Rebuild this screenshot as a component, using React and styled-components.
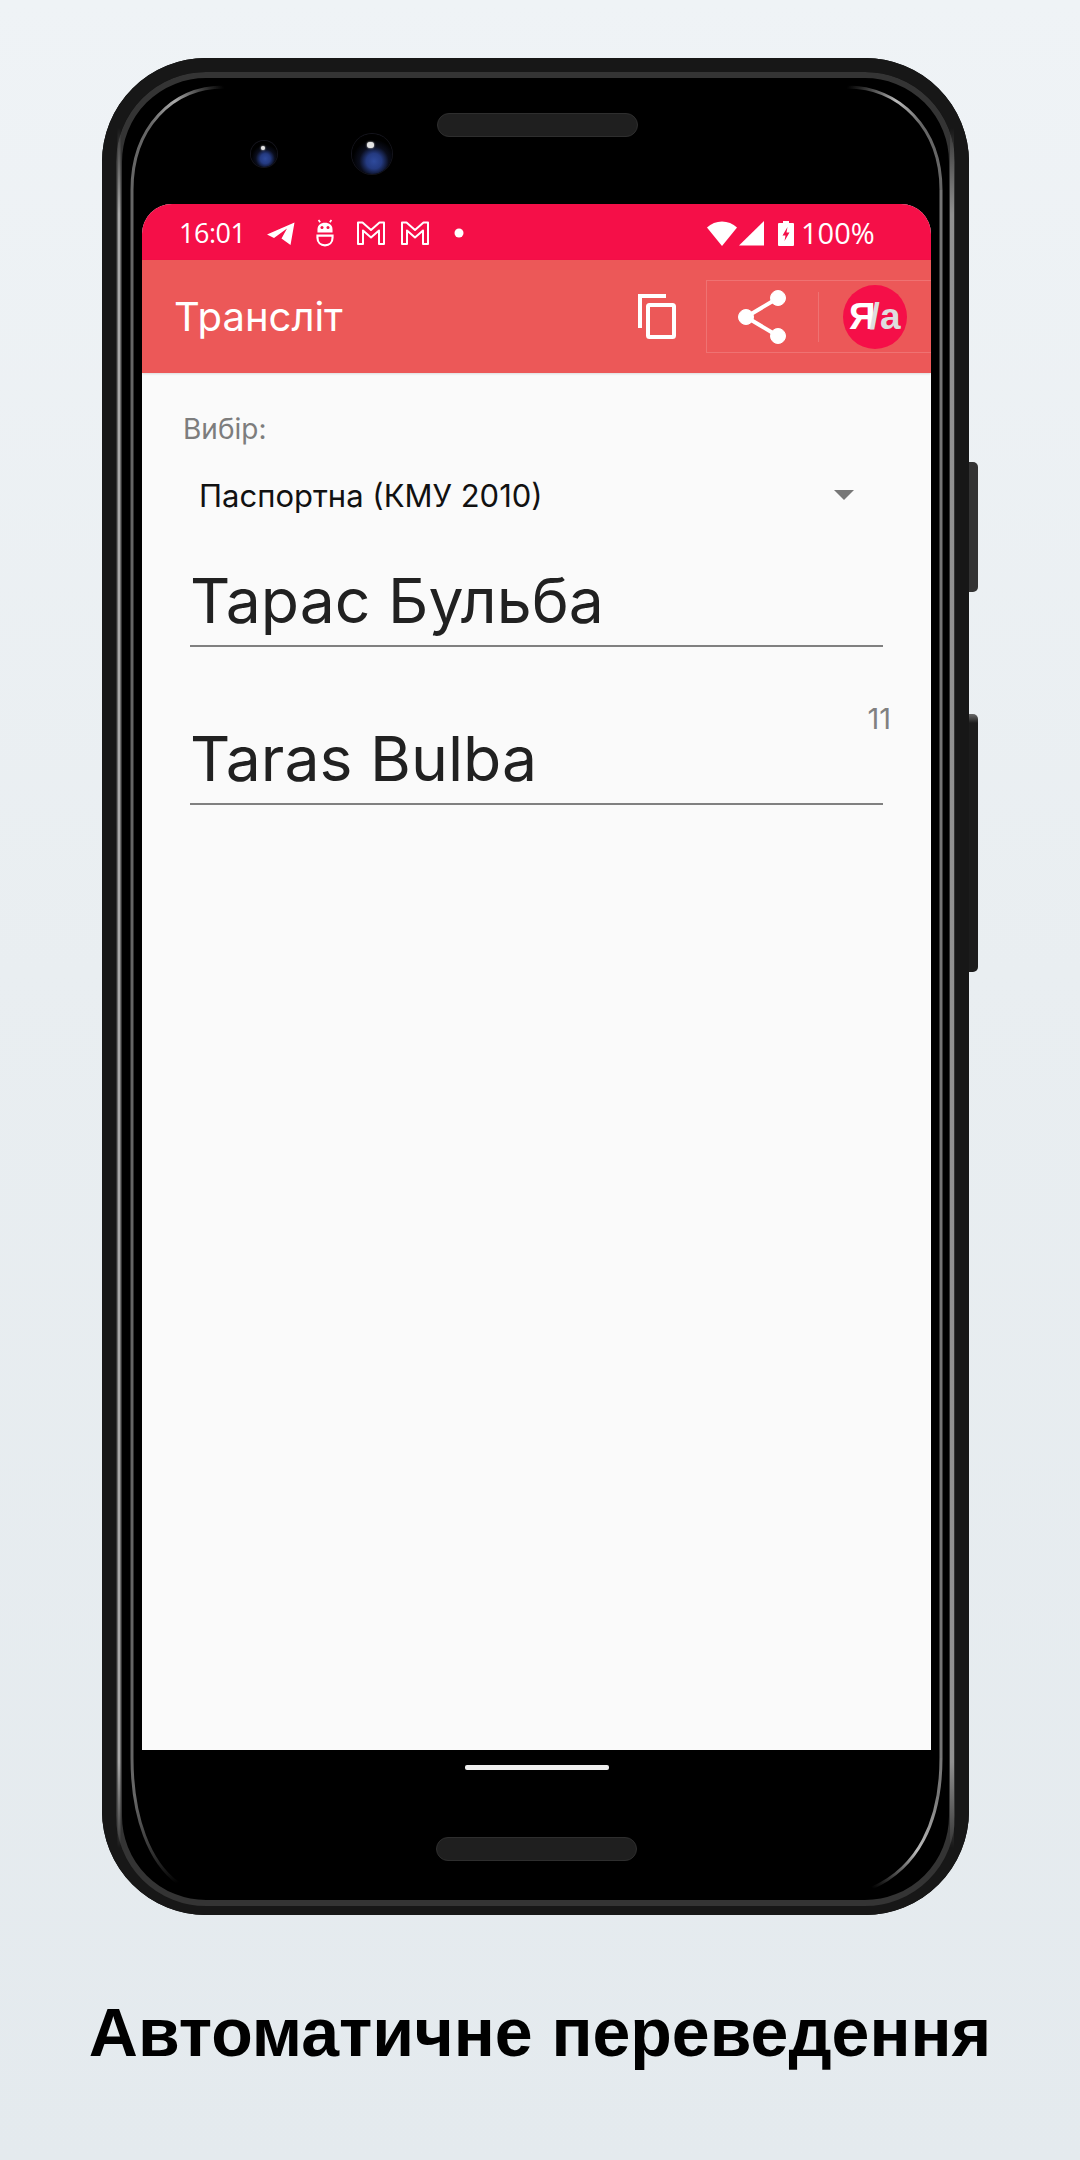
import React from "react";
import styled, { createGlobalStyle } from "styled-components";

const Global = createGlobalStyle`
  html, body { margin: 0; padding: 0; }
  body { font-family: Inter, "Noto Sans", sans-serif; }
`;

const Page = styled.div`
  width: 1080px;
  height: 2160px;
  box-sizing: border-box;
  padding-top: 58px;
  overflow: hidden;
  display: flex;
  flex-direction: column;
  background: linear-gradient(180deg, #eff3f6 0%, #e9eef1 45%, #e4eaee 100%);
`;

const Phone = styled.div`
  position: relative;
  width: 867px;
  height: 1857px;
  margin-left: 102px;
  box-sizing: border-box;
  padding: 0 38px 0 40px;
  display: flex;
  flex-direction: column;
  border-radius: 104px;
  background: #000;
  flex-shrink: 0;
`;

const SideKey = styled.div`
  position: absolute;
  left: 867px;
  top: ${(p) => p.$top}px;
  width: 9px;
  height: ${(p) => p.$height}px;
  border-radius: 0 5px 5px 0;
  background: ${(p) => p.$bg};
`;

const FrameArt = styled.svg`
  position: absolute;
  left: 0;
  top: 0;
  pointer-events: none;
`;

const BottomNotch = styled.div`
  position: absolute;
  left: 388px;
  bottom: 0;
  width: 93px;
  height: 2px;
  background: #e4eaee;
`;

const TopBezel = styled.div`
  height: 146px;
  flex-shrink: 0;
  display: flex;
  align-items: flex-start;
`;

const Lens = styled.div`
  position: relative;
  flex-shrink: 0;
  width: ${(p) => p.$size}px;
  height: ${(p) => p.$size}px;
  margin-top: ${(p) => p.$top}px;
  margin-left: ${(p) => p.$left}px;
  border-radius: 50%;
  background: radial-gradient(circle at 55% 68%, #2e4a9c 0%, #243a80 22%, #0a0d1c 42%, #000 62%);
  box-shadow: 0 0 0 1px #14141c;
  &::after {
    content: "";
    position: absolute;
    left: 38%;
    top: 20%;
    width: 16%;
    height: 16%;
    border-radius: 50%;
    background: #e4e4e4;
    box-shadow: 0 0 2px #fff;
  }
`;

const Speaker = styled.div`
  flex-shrink: 0;
  width: 201px;
  height: 24px;
  margin-top: ${(p) => p.$top}px;
  margin-left: ${(p) => p.$left}px;
  box-sizing: border-box;
  border-radius: 12px;
  border: 1px solid #2e2e2e;
  background: #1f1f1f;
`;

const Screen = styled.div`
  height: 1546px;
  flex-shrink: 0;
  display: flex;
  flex-direction: column;
  border-radius: 30px 30px 0 0;
  overflow: hidden;
  background: #fafafa;
`;

const StatusBar = styled.div`
  height: 56px;
  flex-shrink: 0;
  display: flex;
  align-items: center;
  padding: 2px 0 0 37px;
  box-sizing: border-box;
  background: #f50f48;
  color: #fff;
`;

const StatusText = styled.span`
  flex-shrink: 0;
  line-height: 30px;
  font-family: "Open Sans", Inter, sans-serif;
  font-size: ${(p) => p.$size}px;
  font-weight: 500;
  letter-spacing: ${(p) => p.$spacing || 0}px;
  width: ${(p) => (p.$width ? `${p.$width}px` : "auto")};
  margin-left: ${(p) => p.$left || 0}px;
`;

const StatusIcon = styled.svg`
  display: block;
  flex-shrink: 0;
  margin-left: ${(p) => p.$left}px;
`;

const AppBar = styled.div`
  height: 113px;
  flex-shrink: 0;
  display: flex;
  align-items: center;
  background: #ec5858;
  box-shadow: 0 1px 2px rgba(0, 0, 0, 0.12);
  position: relative;
`;

const Title = styled.h1`
  flex: 1;
  margin: 0 0 0 32px;
  font-size: 40px;
  font-weight: 400;
  color: #fff;
  line-height: 46px;
`;

const CopyIcon = styled.svg`
  display: block;
  margin-right: 30px;
`;

const ActionBox = styled.div`
  width: 225px;
  height: 73px;
  box-sizing: border-box;
  display: flex;
  align-items: center;
  border: 1.5px solid rgba(255, 255, 255, 0.16);
  border-right: none;
`;

const ActionCell = styled.div`
  height: 50px;
  display: flex;
  align-items: center;
  justify-content: center;
  width: ${(p) => p.$width}px;
  border-right: ${(p) => (p.$divider ? "1px solid rgba(255,255,255,0.16)" : "none")};
`;

const Logo = styled.div`
  width: 64px;
  height: 64px;
  border-radius: 50%;
  background: #f50f48;
  flex-shrink: 0;
  display: flex;
  align-items: center;
  justify-content: center;
  font-family: "Liberation Sans", Arial, sans-serif;
  font-weight: 700;
  font-size: 37px;
  line-height: 40px;
`;

const LogoPart = styled.span`
  color: ${(p) => p.$color};
  letter-spacing: ${(p) => p.$spacing || 0}px;
`;

const Body = styled.div`
  flex: 1;
  display: flex;
  flex-direction: column;
`;

const FieldLabel = styled.div`
  margin: 40px 0 0 41px;
  font-size: 28px;
  line-height: 32px;
  color: #7d7d7d;
`;

const Spinner = styled.div`
  margin: 30px 0 0 57px;
  width: 711px;
  height: 40px;
  display: flex;
  align-items: center;
  justify-content: space-between;
  padding-right: 56px;
  box-sizing: border-box;
  font-size: 31px;
  color: #111;
`;

const Caret = styled.div`
  width: 0;
  height: 0;
  border-left: 10.5px solid transparent;
  border-right: 10.5px solid transparent;
  border-top: 10.5px solid #777;
`;

const InputField = styled.div`
  position: relative;
  margin: ${(p) => p.$top}px 0 0 48px;
  width: 693px;
  box-sizing: border-box;
  height: ${(p) => p.$height}px;
  border-bottom: 2px solid #808080;
  padding-top: 17px;
  font-size: 62.5px;
  line-height: 72px;
  color: #212121;
  display: flex;
  align-items: flex-start;
`;

const Counter = styled.div`
  position: absolute;
  right: -8px;
  top: -2px;
  font-size: 29px;
  line-height: 32px;
  color: #808080;
`;

const BottomBezel = styled.div`
  flex: 1;
  display: flex;
  flex-direction: column;
  align-items: center;
`;

const NavPill = styled.div`
  width: 144px;
  height: 5px;
  margin-top: 15px;
  border-radius: 2px;
  background: #eee;
`;

const BottomSpeaker = styled(Speaker)`
  margin-left: 0;
`;

const Caption = styled.div`
  margin-top: 77px;
  text-align: center;
  font-family: "Liberation Sans", Arial, sans-serif;
  font-weight: 700;
  font-size: 68px;
  line-height: 80px;
  color: #000;
`;

function PhoneFrame() {
  return (
    <FrameArt width="867" height="1857" viewBox="0 0 867 1857" fill="none">
      <defs>
        <linearGradient id="fadeTL" gradientUnits="userSpaceOnUse" x1="122" y1="29" x2="50" y2="70">
          <stop offset="0" stopColor="#888" stopOpacity="0" />
          <stop offset="0.6" stopColor="#aaa" />
          <stop offset="1" stopColor="#666" />
        </linearGradient>
        <linearGradient id="fadeTR" gradientUnits="userSpaceOnUse" x1="745" y1="29" x2="817" y2="70">
          <stop offset="0" stopColor="#888" stopOpacity="0" />
          <stop offset="0.6" stopColor="#bbb" />
          <stop offset="1" stopColor="#666" />
        </linearGradient>
        <linearGradient id="fadeBL" gradientUnits="userSpaceOnUse" x1="76" y1="1825" x2="30" y2="1740">
          <stop offset="0" stopColor="#888" stopOpacity="0" />
          <stop offset="1" stopColor="#666" />
        </linearGradient>
        <linearGradient id="fadeBR" gradientUnits="userSpaceOnUse" x1="770" y1="1830" x2="839" y2="1740">
          <stop offset="0" stopColor="#999" stopOpacity="0" />
          <stop offset="0.5" stopColor="#bbb" />
          <stop offset="1" stopColor="#777" />
        </linearGradient>
        <linearGradient id="outerSide" gradientUnits="userSpaceOnUse" x1="0" y1="70" x2="0" y2="1790">
          <stop offset="0" stopColor="#a8a8a8" stopOpacity="0" />
          <stop offset="0.05" stopColor="#a8a8a8" />
          <stop offset="0.95" stopColor="#a8a8a8" />
          <stop offset="1" stopColor="#a8a8a8" stopOpacity="0" />
        </linearGradient>
      </defs>
      <rect x="7" y="7" width="853" height="1843" rx="97" stroke="#171717" strokeWidth="14" />
      <rect x="17" y="17" width="833" height="1828" rx="87" stroke="#343434" strokeWidth="6" />
      <path d="M17 70V1790" stroke="url(#outerSide)" strokeWidth="3" />
      <path d="M850 70V1790" stroke="url(#outerSide)" strokeWidth="4" opacity="0.8" />
      <path d="M122 29C70 29 30 70 30 132" stroke="url(#fadeTL)" strokeWidth="3" />
      <path d="M745 29C797 29 839 70 839 132" stroke="url(#fadeTR)" strokeWidth="3" />
      <path d="M30 132V1700" stroke="#666" strokeWidth="3" />
      <path d="M839 132V1700" stroke="#747474" strokeWidth="3" />
      <path d="M30 1700C30 1760 48 1805 76 1825" stroke="url(#fadeBL)" strokeWidth="3" />
      <path d="M839 1700C839 1765 815 1810 770 1830" stroke="url(#fadeBR)" strokeWidth="3" />
    </FrameArt>
  );
}

function MailGlyph({ left }) {
  return (
    <StatusIcon $left={left} width="28" height="24" viewBox="0 0 28 24" fill="none">
      <path d="M1 23V1.5H5.5L14 9L22.5 1.5H27V23H22V9.5L14 16.5L6 9.5V23Z" stroke="#fff" strokeWidth="2" strokeLinejoin="round" />
    </StatusIcon>
  );
}

export default function App() {
  return (
    <Page>
      <Global />
      <Phone>
        <SideKey $top={404} $height={130} $bg="#333" />
        <SideKey $top={656} $height={258} $bg="linear-gradient(180deg, #6a6a6a 0, #1c1c1c 9px)" />
        <TopBezel>
          <Lens $size={26} $top={83} $left={109} />
          <Lens $size={40} $top={76} $left={75} />
          <Speaker $top={55} $left={45} />
        </TopBezel>
        <Screen>
          <StatusBar>
            <StatusText $size={27} $spacing={-0.5} $width={65}>16:01</StatusText>
            <StatusIcon $left={23} width="28" height="24" viewBox="0 0 28 24" fill="#fff">
              <path d="M0 13.5L27.5 1.5L23.5 24L14.5 17.5L20 7.5L7 17Z" strokeLinejoin="round" />
            </StatusIcon>
            <StatusIcon $left={19} width="22" height="28" viewBox="0 0 20 26" fill="none">
              <path d="M3 10C3 5.5 6 3.5 10 3.5S17 5.5 17 10V12.5H3Z" fill="#fff" />
              <circle cx="7.2" cy="8" r="1.4" fill="#f50f48" />
              <circle cx="12.8" cy="8" r="1.4" fill="#f50f48" />
              <path d="M4 1L5.5 3M16 1L14.5 3" stroke="#fff" strokeWidth="1.6" />
              <path d="M3 15.5H17V17.5C17 21.8 14 24.5 10 24.5S3 21.8 3 17.5Z" stroke="#fff" strokeWidth="2" />
            </StatusIcon>
            <MailGlyph left={21} />
            <MailGlyph left={16} />
            <StatusIcon $left={25} width="10" height="10" viewBox="0 0 10 10" fill="#fff">
              <circle cx="5" cy="5" r="4.5" />
            </StatusIcon>
            <StatusIcon $left={243} width="30" height="25" viewBox="0 0 30 25" fill="#fff">
              <path d="M0 6.5C8 -1.5 22 -1.5 30 6.5L15 25Z" />
            </StatusIcon>
            <StatusIcon $left={2} width="25" height="25" viewBox="0 0 25 25" fill="#fff">
              <path d="M25 0V24.5H0Z" />
            </StatusIcon>
            <StatusIcon $left={14} width="16" height="25" viewBox="0 0 16 25" fill="#fff">
              <path d="M5 0H11V2H15A1 1 0 0 1 16 3V24A1 1 0 0 1 15 25H1A1 1 0 0 1 0 24V3A1 1 0 0 1 1 2H5Z" />
              <path d="M9.5 6L4.5 14.5H7.5L6.5 20L11.5 11.5H8.5Z" fill="#f50f48" />
            </StatusIcon>
            <StatusText $size={29} $left={7}>100%</StatusText>
          </StatusBar>
          <AppBar>
            <Title>Трансліт</Title>
            <CopyIcon width="38" height="45" viewBox="0 0 38 45" fill="none" stroke="#fff" strokeWidth="4">
              <path d="M28 2H2V34" />
              <rect x="10" y="11" width="26" height="32" rx="1.5" />
            </CopyIcon>
            <ActionBox>
              <ActionCell $width={111} $divider>
                <svg width="48" height="56" viewBox="0 0 48 56" fill="#fff" stroke="#fff">
                  <path d="M40 9L8 28L40 47" fill="none" strokeWidth="4" />
                  <circle cx="40" cy="9" r="7.5" />
                  <circle cx="8" cy="28" r="7.5" />
                  <circle cx="40" cy="47" r="7.5" />
                </svg>
              </ActionCell>
              <ActionCell $width={113}>
                <Logo>
                  <LogoPart $color="#fff" $spacing={-6}>Я</LogoPart>
                  <LogoPart $color="#dedede">/a</LogoPart>
                </Logo>
              </ActionCell>
            </ActionBox>
          </AppBar>
          <Body>
            <FieldLabel>Вибір:</FieldLabel>
            <Spinner>
              Паспортна (КМУ 2010)
              <Caret />
            </Spinner>
            <InputField $top={32} $height={100}>Тарас Бульба</InputField>
            <InputField $top={58} $height={100}>
              Taras Bulba
              <Counter>11</Counter>
            </InputField>
          </Body>
        </Screen>
        <BottomBezel>
          <NavPill />
          <BottomSpeaker $top={67} />
        </BottomBezel>
        <BottomNotch />
        <PhoneFrame />
      </Phone>
      <Caption>Автоматичне переведення</Caption>
    </Page>
  );
}
